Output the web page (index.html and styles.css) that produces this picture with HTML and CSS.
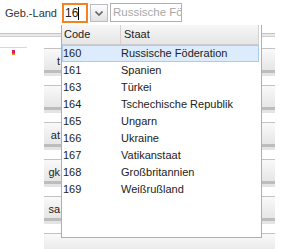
FILE: index.html
```html
<!DOCTYPE html>
<html>
<head>
<meta charset="utf-8">
<link rel="stylesheet" href="styles.css">
</head>
<body>
<div class="page">
  <div class="toolbar">
    <span class="label">Geb.-Land</span>
    <div class="code-input"><span class="typed">16</span><span class="caret"></span></div>
    <div class="trigger">
      <svg width="8" height="5" viewBox="0 0 8 5"><path d="M0.5 0.5 L4 4 L7.5 0.5" fill="none" stroke="#666" stroke-width="1.6"/></svg>
    </div>
    <div class="name-input">Russische Föderation</div>
  </div>
  <div class="left-bits">
    <div class="lb-line"></div>
    <div class="lb-icon"></div>
  </div>
  <div class="sep"></div>
  <div class="rows">
    <div class="row"><div class="btn"><span class="frag">t</span></div><div class="band"></div></div>
    <div class="row"><div class="btn"><span class="frag"></span></div><div class="band"></div></div>
    <div class="row"><div class="btn"><span class="frag">at</span></div><div class="band"></div></div>
    <div class="row"><div class="btn"><span class="frag">gk</span></div><div class="band"></div></div>
    <div class="row"><div class="btn"><span class="frag">sa</span></div><div class="band"></div></div>
    <div class="row"><div class="btn"><span class="frag"></span></div><div class="band"></div></div>
  </div>

  <div class="popup">
    <div class="phead">
      <div class="hcell hcode">Code</div>
      <div class="hcell hname">Staat</div>
    </div>
    <div class="plist">
      <div class="item selected"><span class="c">160</span><span class="n">Russische Föderation</span></div>
      <div class="item"><span class="c">161</span><span class="n">Spanien</span></div>
      <div class="item"><span class="c">163</span><span class="n">Türkei</span></div>
      <div class="item"><span class="c">164</span><span class="n">Tschechische Republik</span></div>
      <div class="item"><span class="c">165</span><span class="n">Ungarn</span></div>
      <div class="item"><span class="c">166</span><span class="n">Ukraine</span></div>
      <div class="item"><span class="c">167</span><span class="n">Vatikanstaat</span></div>
      <div class="item"><span class="c">168</span><span class="n">Großbritannien</span></div>
      <div class="item"><span class="c">169</span><span class="n">Weißrußland</span></div>
    </div>
  </div>
</div>
</body>
</html>
```

FILE: styles.css
```css
html, body {
  margin: 0;
  padding: 0;
  background: #fff;
}
body {
  font-family: "Liberation Sans", Arial, sans-serif;
  font-size: 11px;
  color: #222;
  width: 298px;
  height: 249px;
  overflow: hidden;
}
.page {
  position: relative;
  width: 298px;
  height: 249px;
  overflow: hidden;
}
.toolbar {
  display: flex;
  align-items: flex-start;
  height: 26px;
  padding: 3px 0 0 5px;
  box-sizing: border-box;
}
.label {
  width: 57px;
  line-height: 20px;
  color: #333;
  font-size: 11px;
}
.code-input {
  width: 26px;
  height: 20px;
  box-sizing: border-box;
  border: 2px solid #f5811f;
  background: #fff;
  display: flex;
  align-items: center;
  padding-left: 1px;
  color: #222;
  font-size: 12px;
}
.caret {
  width: 1px;
  height: 13px;
  background: #000;
}
.trigger {
  width: 18px;
  height: 18px;
  margin: 1px 0 0 2px;
  box-sizing: border-box;
  border: 1px solid #b8bcc6;
  background: linear-gradient(#fdfdfd, #e2e2e2);
  display: flex;
  align-items: center;
  justify-content: center;
}
.name-input {
  width: 72px;
  height: 19px;
  margin: 0 0 0 2px;
  box-sizing: border-box;
  border: 1px solid #b0b0b0;
  color: #a8a8a8;
  padding: 0 0 0 2px;
  line-height: 17px;
  white-space: nowrap;
  overflow: hidden;
  font-size: 11.5px;
}
.left-bits {
  position: absolute;
  left: 0;
  top: 47px;
  width: 30px;
  height: 12px;
}
.lb-line {
  width: 27px;
  height: 1px;
  background: #d8d8d8;
}
.lb-icon {
  position: absolute;
  left: 12px;
  top: 3px;
  width: 3px;
  height: 5px;
  background: linear-gradient(#d1207a, #e8183c 60%, #f0c020);
}
.sep {
  width: 275px;
  margin-top: 7px;
  height: 2px;
  border-top: 1px solid #c4c4c4;
  border-bottom: 1px solid #cfcfcf;
  background: #e9e9e9;
}
.rows {
  display: flex;
  flex-direction: column;
  margin-top: 11px;
  padding-left: 44px;
  width: 231px;
  height: 201px;
  overflow: hidden;
}
.row {
  height: 37px;
  flex: none;
}
.btn {
  height: 21px;
  border-top: 1px solid #c2c2c2;
  background: linear-gradient(#f9f9f9, #e6e6e6);
  display: flex;
  align-items: center;
}
.frag {
  width: 16px;
  text-align: right;
  padding-right: 1px;
  color: #222;
  font-size: 11px;
  line-height: 14px;
  padding-top: 2px;
}
.band {
  height: 3px;
  background: #bdbdbd;
  border-bottom: 3px solid #e4e4e4;
}
.popup {
  position: absolute;
  left: 61px;
  top: 25px;
  width: 201px;
  height: 213px;
  box-sizing: border-box;
  border: 1px solid #9db2cc;
  border-top: none;
  background: #fff;
}
.phead {
  display: flex;
  height: 20px;
  width: 197px;
  box-sizing: border-box;
  border-bottom: 1px solid #cdcdcd;
  background: linear-gradient(#f7f7f7, #e5e5e5);
}
.hcell {
  line-height: 19px;
  color: #222;
  box-sizing: border-box;
  border-right: 1px solid #d2d2d2;
}
.hcode {
  width: 59px;
  padding-left: 2px;
}
.hname {
  flex: 1;
  padding-left: 3px;
}
.plist {
  display: flex;
  flex-direction: column;
}
.item {
  display: flex;
  height: 17px;
  line-height: 14px;
  box-sizing: border-box;
  border: 1px solid transparent;
  width: 197px;
  color: #222;
}
.item.selected {
  background: #dcecfd;
  border-color: #a8cbf0;
}
.c {
  width: 58px;
}
.n {
  flex: 1;
  white-space: nowrap;
}
```
